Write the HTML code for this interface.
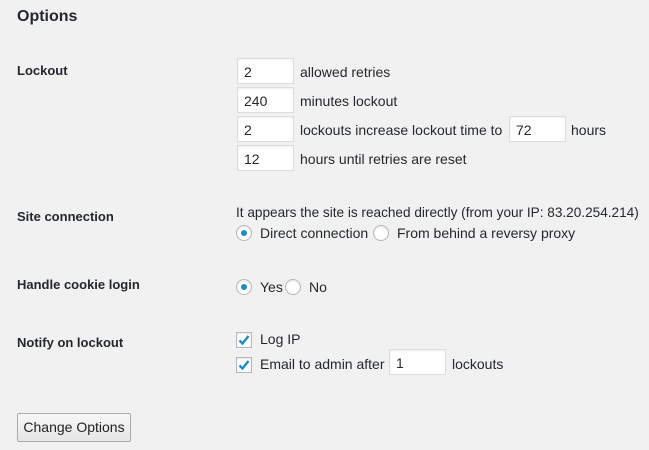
<!DOCTYPE html>
<html><head><meta charset="utf-8"><style>
body{margin:0;width:649px;height:450px;background:#f1f1f1;font-family:"Liberation Sans",sans-serif;font-size:14px;color:#23282d;position:relative;overflow:hidden}
.a{position:absolute;white-space:nowrap}
.lbl{font-weight:bold;font-size:13px}
.in{position:absolute;width:55px;height:24px;background:#fff;border:1px solid #ddd;box-shadow:inset 0 1px 2px rgba(0,0,0,.07);box-sizing:content-box;font-size:14px;line-height:24px}
.in span{position:absolute;left:6px;top:1px}
.r{position:absolute;width:14px;height:14px;border:1px solid #b4b9be;border-radius:50%;background:#fff;box-shadow:inset 0 1px 2px rgba(0,0,0,.1)}
.r.on::after{content:"";position:absolute;left:4px;top:4px;width:6px;height:6px;border-radius:50%;background:#1e8cbe}
.c{position:absolute;width:14px;height:14px;border:1px solid #b4b9be;background:#fff;box-shadow:inset 0 1px 2px rgba(0,0,0,.1)}
</style></head><body>
<div class="a" style="left:17px;top:8px;font-size:16px;font-weight:bold">Options</div>

<div class="a lbl" style="left:17px;top:63px">Lockout</div>
<div class="in" style="left:237px;top:58px"><span>2</span></div><div class="a" style="left:300px;top:64px">allowed retries</div>
<div class="in" style="left:237px;top:87px"><span>240</span></div><div class="a" style="left:300px;top:93px">minutes lockout</div>
<div class="in" style="left:237px;top:116px"><span>2</span></div><div class="a" style="left:300px;top:122px">lockouts increase lockout time to</div>
<div class="in" style="left:509px;top:116px"><span>72</span></div><div class="a" style="left:571px;top:122px">hours</div>
<div class="in" style="left:237px;top:145px"><span>12</span></div><div class="a" style="left:300px;top:151px">hours until retries are reset</div>

<div class="a lbl" style="left:17px;top:209px">Site connection</div>
<div class="a" style="left:236px;top:205px;font-size:13.6px">It appears the site is reached directly (from your IP: 83.20.254.214)</div>
<div class="r on" style="left:236px;top:225px"></div><div class="a" style="left:260px;top:225px">Direct connection</div>
<div class="r" style="left:373px;top:225px"></div><div class="a" style="left:397px;top:225px">From behind a reversy proxy</div>

<div class="a lbl" style="left:17px;top:277px">Handle cookie login</div>
<div class="r on" style="left:236px;top:279px"></div><div class="a" style="left:260px;top:279px">Yes</div>
<div class="r" style="left:285px;top:279px"></div><div class="a" style="left:309px;top:279px">No</div>

<div class="a lbl" style="left:17px;top:335px">Notify on lockout</div>
<div class="c" style="left:236px;top:332px"><svg width="14" height="14" viewBox="0 0 14 14" style="position:absolute;left:0;top:0"><path d="M2.5 7.5 L5.5 10.5 L11.5 3" fill="none" stroke="#1e8cbe" stroke-width="2.4"/></svg></div>
<div class="a" style="left:260px;top:331px">Log IP</div>
<div class="c" style="left:236px;top:357px"><svg width="14" height="14" viewBox="0 0 14 14" style="position:absolute;left:0;top:0"><path d="M2.5 7.5 L5.5 10.5 L11.5 3" fill="none" stroke="#1e8cbe" stroke-width="2.4"/></svg></div>
<div class="a" style="left:260px;top:356px">Email to admin after</div>
<div class="in" style="left:389px;top:349px"><span>1</span></div><div class="a" style="left:452px;top:356px">lockouts</div>

<div class="a" style="left:17px;top:413px;width:112px;height:27px;border:1px solid #aaa;border-radius:2px;background:linear-gradient(#f7f7f7,#e6e6e6);text-align:center;line-height:27px;color:#222">Change Options</div>
</body></html>
